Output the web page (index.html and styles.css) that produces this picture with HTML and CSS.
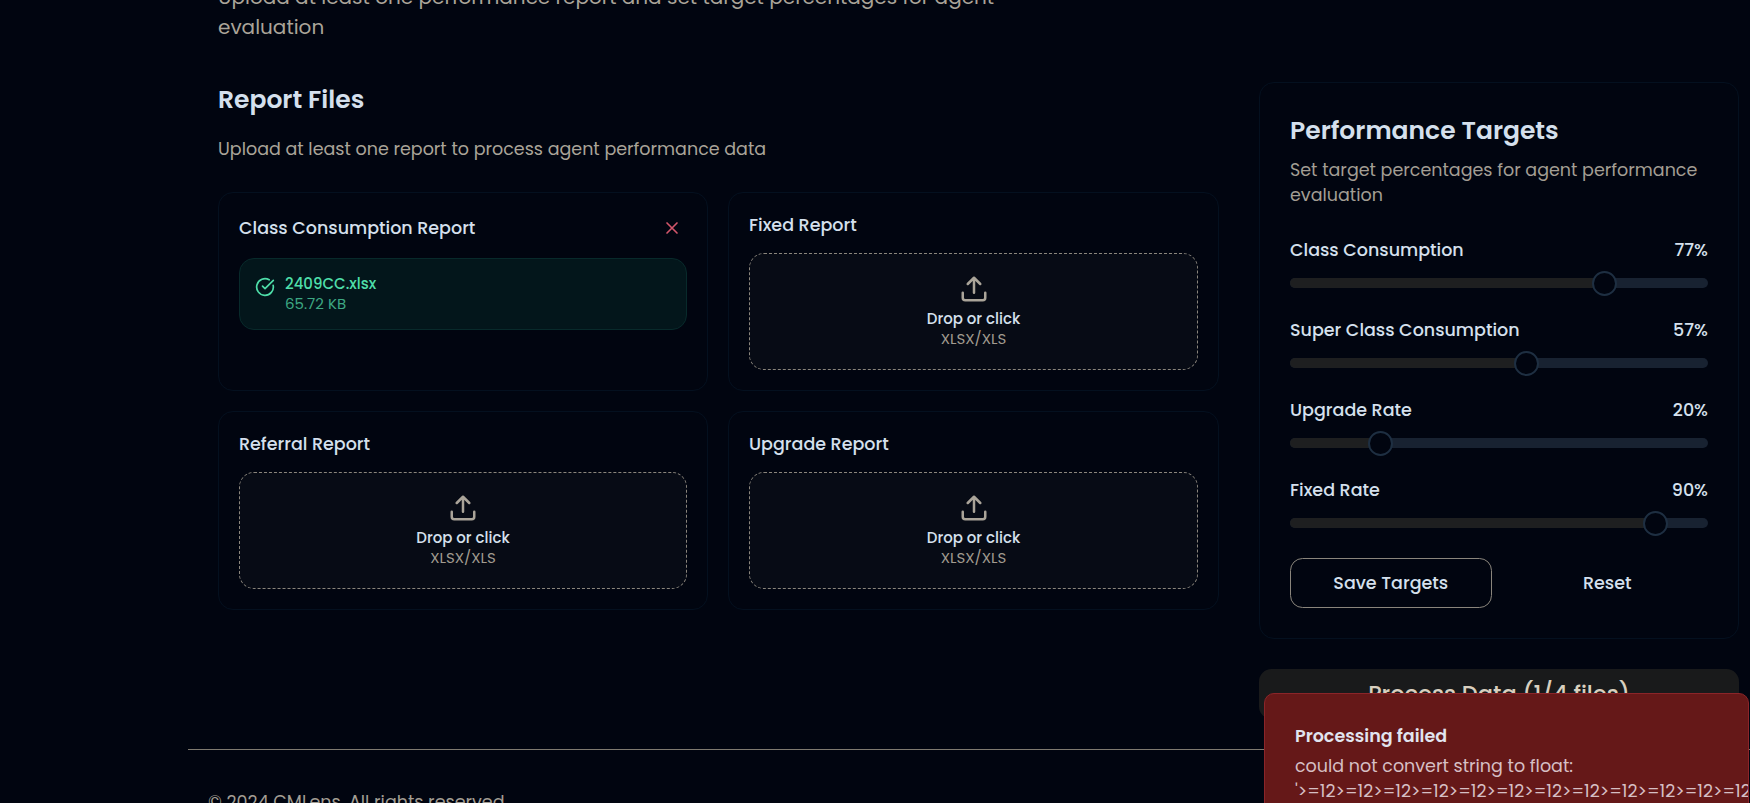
FILE: index.html
```html
<!DOCTYPE html>
<html lang="en">
<head>
<meta charset="utf-8">
<title>CMLens</title>
<link rel="stylesheet" href="styles.css">
</head>
<body>
<svg class="sprite" aria-hidden="true">
  <symbol id="upload" viewBox="0 0 24 24"><path d="M21 15v4a2 2 0 0 1-2 2H5a2 2 0 0 1-2-2v-4M17 8l-5-5-5 5M12 3v12"/></symbol>
</svg>
<div class="page">
  <main class="main">
    <p class="intro">Upload at least one performance report and set target percentages for agent<br>evaluation</p>
    <div class="columns">
      <section class="reports">
        <h2 class="heading">Report Files</h2>
        <p class="reports-sub">Upload at least one report to process agent performance data</p>
        <div class="cards">
          <article class="card">
            <div class="card-head">
              <h3 class="card-title">Class Consumption Report</h3>
              <button class="remove" aria-label="Remove"><svg viewBox="0 0 24 24"><path d="M18 6 6 18M6 6l12 12"/></svg></button>
            </div>
            <div class="file">
              <svg class="file-icon" viewBox="0 0 24 24"><path d="M21.801 10A10 10 0 1 1 17 3.335"/><path d="m9 11 3 3L22 4"/></svg>
              <div><p class="file-name">2409CC.xlsx</p><p class="file-size">65.72 KB</p></div>
            </div>
          </article>
          <article class="card">
            <h3 class="card-title">Fixed Report</h3>
            <div class="drop"><svg><use href="#upload"/></svg><p class="drop-text">Drop or click</p><p class="drop-type">XLSX/XLS</p></div>
          </article>
          <article class="card">
            <h3 class="card-title">Referral Report</h3>
            <div class="drop"><svg><use href="#upload"/></svg><p class="drop-text">Drop or click</p><p class="drop-type">XLSX/XLS</p></div>
          </article>
          <article class="card">
            <h3 class="card-title">Upgrade Report</h3>
            <div class="drop"><svg><use href="#upload"/></svg><p class="drop-text">Drop or click</p><p class="drop-type">XLSX/XLS</p></div>
          </article>
        </div>
      </section>
      <aside class="side">
        <section class="panel">
          <h2 class="heading">Performance Targets</h2>
          <p class="panel-sub">Set target percentages for agent performance<br>evaluation</p>
          <div class="target">
            <div class="target-row"><span>Class Consumption</span><span>77%</span></div>
            <div class="slider" style="--v:.77"><div class="range"></div><div class="thumb"></div></div>
          </div>
          <div class="target">
            <div class="target-row"><span>Super Class Consumption</span><span>57%</span></div>
            <div class="slider" style="--v:.57"><div class="range"></div><div class="thumb"></div></div>
          </div>
          <div class="target">
            <div class="target-row"><span>Upgrade Rate</span><span>20%</span></div>
            <div class="slider" style="--v:.20"><div class="range"></div><div class="thumb"></div></div>
          </div>
          <div class="target">
            <div class="target-row"><span>Fixed Rate</span><span>90%</span></div>
            <div class="slider" style="--v:.90"><div class="range"></div><div class="thumb"></div></div>
          </div>
          <div class="actions">
            <button class="btn btn-outline">Save Targets</button>
            <button class="btn">Reset</button>
          </div>
        </section>
        <button class="process">Process Data (1/4 files)</button>
      </aside>
    </div>
  </main>
  <footer class="footer">© 2024 CMLens. All rights reserved.</footer>
</div>
<div class="toast" role="alert">
  <p class="toast-title">Processing failed</p>
  <p class="toast-text">could not convert string to float:</p>
  <p class="toast-value">'&gt;=12&gt;=12&gt;=12&gt;=12&gt;=12&gt;=12&gt;=12&gt;=12&gt;=12&gt;=12&gt;=12&gt;=12&gt;=12</p>
</div>
</body>
</html>
```

FILE: styles.css
```css
* { box-sizing: border-box; margin: 0; padding: 0; }
html, body { height: 803px; overflow: hidden; }
body { background: #010510; color: #d5e0ed; font: 400 17.5px/25px Poppins, Inter, sans-serif; }
button { background: none; border: 0; color: inherit; font: inherit; }
.sprite { display: none; }
svg { display: block; fill: none; stroke: currentColor; stroke-width: 2; stroke-linecap: round; stroke-linejoin: round; }

.page { height: 803px; padding-left: 188px; overflow: hidden; }
.main { height: 767px; padding: 0 11px 0 30px; }
.intro { margin-top: -18px; font-size: 20px; line-height: 30px; color: #aaa499; white-space: nowrap; }
.columns { display: flex; gap: 40px; margin-top: 40.25px; }
.heading { font-size: 25px; font-weight: 600; line-height: 36px; white-space: nowrap; }

.reports { width: 1001px; }
.reports-sub { margin-top: 18.25px; color: #aaa499; }
.cards { display: grid; grid-template-columns: 490px 491px; gap: 20px; margin-top: 30.75px; }
.card { height: 198.75px; padding: 20px; border: 1px solid #04101f; border-radius: 15px; }
.card-title { font-size: 17.5px; font-weight: 500; line-height: 24px; }
.card-head { display: flex; justify-content: space-between; align-items: center; height: 30px; }
.remove { padding: 5px; color: #d2566b; }
.remove svg { width: 20px; height: 20px; }
.file { display: flex; gap: 10px; height: 72px; margin-top: 15px; padding: 15px; border: 1px solid #082a2b; border-radius: 15px; background: #03161b; color: #4edea9; }
.file-icon { width: 20px; height: 20px; margin-top: 2.5px; }
.file p { font-size: 15px; line-height: 20px; }
.file-name { font-weight: 500; }
.file-size { color: #3da883; }
.drop { display: flex; flex-direction: column; align-items: center; height: 117px; margin-top: 16px; padding-top: 20px; border: 1px dashed #8a857c; border-radius: 15px; background: #070b15; font-size: 15px; line-height: 20px; }
.drop svg { width: 30px; height: 30px; margin-bottom: 5px; color: #aaa499; }
.drop-text { font-weight: 500; }
.drop-type { color: #a19b90; }

.side { width: 480px; }
.panel { height: 556.25px; padding: 30px; border: 1px solid #04101f; border-radius: 15px; }
.panel-sub { margin-top: 9px; color: #a39e94; white-space: nowrap; }
.target { height: 80px; }
.panel-sub + .target { margin-top: 30px; }
.target-row { display: flex; justify-content: space-between; font-weight: 500; }
.slider { position: relative; height: 10px; margin-top: 14.75px; border-radius: 5px; background: #182231; }
.range { width: calc(12px + (100% - 24px) * var(--v)); height: 10px; border-radius: 5px 0 0 5px; background: #1e1f20; }
.thumb { position: absolute; top: -7.5px; left: calc((100% - 25px) * var(--v) - .4px); width: 25px; height: 25px; border: 2px solid #1e2f42; border-radius: 50%; background: #010510; }
.actions { display: grid; grid-template-columns: 1fr 1fr; gap: 15px; margin-top: -.25px; }
.btn { height: 50px; border-radius: 12.5px; font-weight: 500; }
.btn-outline { border: 1px solid #8a857c; }
.process { display: block; width: 480px; height: 50px; margin-top: 30.5px; border-radius: 12.5px; background: #191a1b; color: #d8cfbf; font-size: 22.5px; font-weight: 500; }

.footer { height: 90px; padding: 39.5px 20px; border-top: 1px solid #7f7a70; color: #a39e94; }

.toast { position: absolute; left: 1264px; top: 693px; width: 485px; height: 150px; padding: 29.5px 30px; border: 1px solid #8b2529; border-radius: 10px; background: #651818; overflow: hidden; white-space: nowrap; }
.toast-title { font-weight: 600; color: #e1e4ef; }
.toast-text { margin-top: 5px; color: #d6bfc4; }
.toast-value { color: #d6bfc4; }
```
